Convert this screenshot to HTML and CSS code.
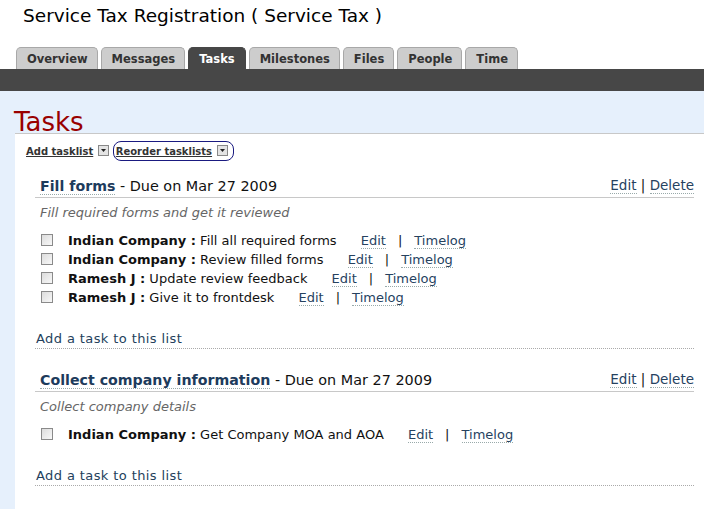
FILE: index.html
```html
<!DOCTYPE html>
<html lang="en">
<head>
  <meta charset="UTF-8" />
  <title>Service Tax Registration - Tasks</title>
  <link rel="stylesheet" href="styles.css">
</head>
<body>

<div class="header">
  <div class="project-title">Service Tax Registration ( Service Tax )</div>
  <div class="tabs">
    <span class="tab">Overview</span>
    <span class="tab">Messages</span>
    <span class="tab active">Tasks</span>
    <span class="tab">Milestones</span>
    <span class="tab">Files</span>
    <span class="tab">People</span>
    <span class="tab">Time</span>
  </div>
</div>
<div class="bar"></div>

<div class="main">
  <h1 class="page-title">Tasks</h1>

  <div class="panel">
    <div class="toolbar">
      <span class="tool"><a>Add tasklist</a> <svg class="drop" width="11" height="11" viewBox="0 0 11 11"><rect x="0.5" y="0.5" width="10" height="10" fill="#e4e4e4" stroke="#888"/><path d="M3 4h5l-2.5 3z" fill="#222"/></svg></span>
      <span class="tool ring"><a>Reorder tasklists</a> <svg class="drop" width="11" height="11" viewBox="0 0 11 11"><rect x="0.5" y="0.5" width="10" height="10" fill="#e4e4e4" stroke="#888"/><path d="M3 4h5l-2.5 3z" fill="#222"/></svg></span>
    </div>

    <div class="tasklist">
      <div class="list-head">
        <div><a class="list-name">Fill forms</a> - Due on Mar 27 2009</div>
        <div class="list-actions"><a>Edit</a> | <a>Delete</a></div>
      </div>
      <div class="list-desc">Fill required forms and get it reviewed</div>
      <ul class="tasks">
        <li><span class="check"></span><b>Indian Company :</b> Fill all required forms <span class="task-links"><a>Edit</a><span class="sep">|</span><a>Timelog</a></span></li>
        <li><span class="check"></span><b>Indian Company :</b> Review filled forms <span class="task-links"><a>Edit</a><span class="sep">|</span><a>Timelog</a></span></li>
        <li><span class="check"></span><b>Ramesh J :</b> Update review feedback <span class="task-links"><a>Edit</a><span class="sep">|</span><a>Timelog</a></span></li>
        <li><span class="check"></span><b>Ramesh J :</b> Give it to frontdesk <span class="task-links"><a>Edit</a><span class="sep">|</span><a>Timelog</a></span></li>
      </ul>
      <div class="add-task">Add a task to this list</div>
    </div>

    <div class="tasklist">
      <div class="list-head">
        <div><a class="list-name">Collect company information</a> - Due on Mar 27 2009</div>
        <div class="list-actions"><a>Edit</a> | <a>Delete</a></div>
      </div>
      <div class="list-desc">Collect company details</div>
      <ul class="tasks">
        <li><span class="check"></span><b>Indian Company :</b> Get Company MOA and AOA <span class="task-links"><a>Edit</a><span class="sep">|</span><a>Timelog</a></span></li>
      </ul>
      <div class="add-task">Add a task to this list</div>
    </div>
  </div>
</div>

</body>
</html>
```

FILE: styles.css
```css
body {
  margin: 0;
  font-family: 'DejaVu Sans', Verdana, sans-serif;
  background: #e6f0fc;
  color: #111;
}
.header {
  background: #fff;
  height: 69px;
  display: flex;
  flex-direction: column;
}
.project-title {
  font-size: 18.5px;
  padding: 5px 0 0 23px;
  height: 42px;
  box-sizing: border-box;
  color: #000;
}
.tabs {
  display: flex;
  gap: 3px;
  padding-left: 16px;
  margin-top: 5px;
}
.tab {
  height: 22px;
  line-height: 22px;
  padding: 0 9px 0 10px;
  box-sizing: border-box;
  border: 1px solid #a8a8a8;
  border-bottom: none;
  border-radius: 5px 5px 0 0;
  background: #cdcdcd;
  font-size: 11.5px;
  font-weight: bold;
  color: #333;
}
.tab.active {
  background: #474747;
  border-color: #474747;
  color: #fff;
  padding: 0 10px;
}
.bar {
  height: 22px;
  background: #474747;
}
.main {
  padding-left: 15px;
}
.page-title {
  margin: 0;
  height: 42px;
  box-sizing: border-box;
  padding-top: 17px;
  margin-left: -1px;
  font-size: 26px;
  font-weight: normal;
  color: #990000;
  line-height: 28px;
}
.panel {
  background: #fff;
  border-top: 1px solid #c8c8c8;
  padding: 7px 10px 24px 0;
  min-height: 360px;
}
.toolbar {
  display: flex;
  align-items: center;
  padding-left: 11px;
  gap: 4px;
  height: 20px;
  font-size: 10px;
  font-weight: bold;
}
.tool a {
  color: #333;
  text-decoration: underline;
}
.tool .drop {
  vertical-align: -1px;
  margin-left: 1px;
}
.tool.ring {
  border: 1px solid #1a1a80;
  border-radius: 8px;
  padding: 0 5px 0 2px;
  height: 20px;
  line-height: 19px;
  box-sizing: border-box;
}
.tasklist {
  margin-left: 20px;
}
.tasklist + .tasklist .list-head {
  margin-top: 22px;
}
.list-head {
  display: flex;
  justify-content: space-between;
  align-items: flex-end;
  border-bottom: 1px solid #c8c8c8;
  padding: 0 0 3px 5px;
  margin-top: 16px;
  font-size: 14.4px;
  color: #111;
}
.list-name {
  font-size: 14.2px;
  font-weight: bold;
  color: #1d3b5c;
  border-bottom: 1px dotted #9aa;
}
.list-actions a,
.task-links a {
  color: #26425f;
  border-bottom: 1px dotted #9aa;
}
.list-actions {
  font-size: 13.5px;
  color: #111;
  padding-bottom: 1px;
}
.list-desc {
  font-size: 13px;
  font-style: italic;
  color: #666;
  padding: 7px 0 0 5px;
  height: 21px;
}
.tasks {
  list-style: none;
  margin: 5px 0 0;
  padding: 0;
}
.tasks li {
  font-size: 13px;
  height: 19px;
  line-height: 19px;
  padding-left: 6px;
  color: #111;
}
.tasks b {
  color: #111;
}
.check {
  display: inline-block;
  width: 10px;
  height: 10px;
  border: 1px solid #8a8a8a;
  background: linear-gradient(135deg, #dcdcdc, #f8f8f8);
  vertical-align: -1px;
  margin-right: 15px;
}
.task-links {
  margin-left: 20px;
}
.sep {
  margin: 0 12px;
  color: #111;
}
.add-task {
  margin-top: 24px;
  font-size: 13px;
  letter-spacing: 0.4px;
  color: #243f5c;
  padding-left: 1px;
  padding-bottom: 2px;
  border-bottom: 1px dotted #aaa;
}
```
